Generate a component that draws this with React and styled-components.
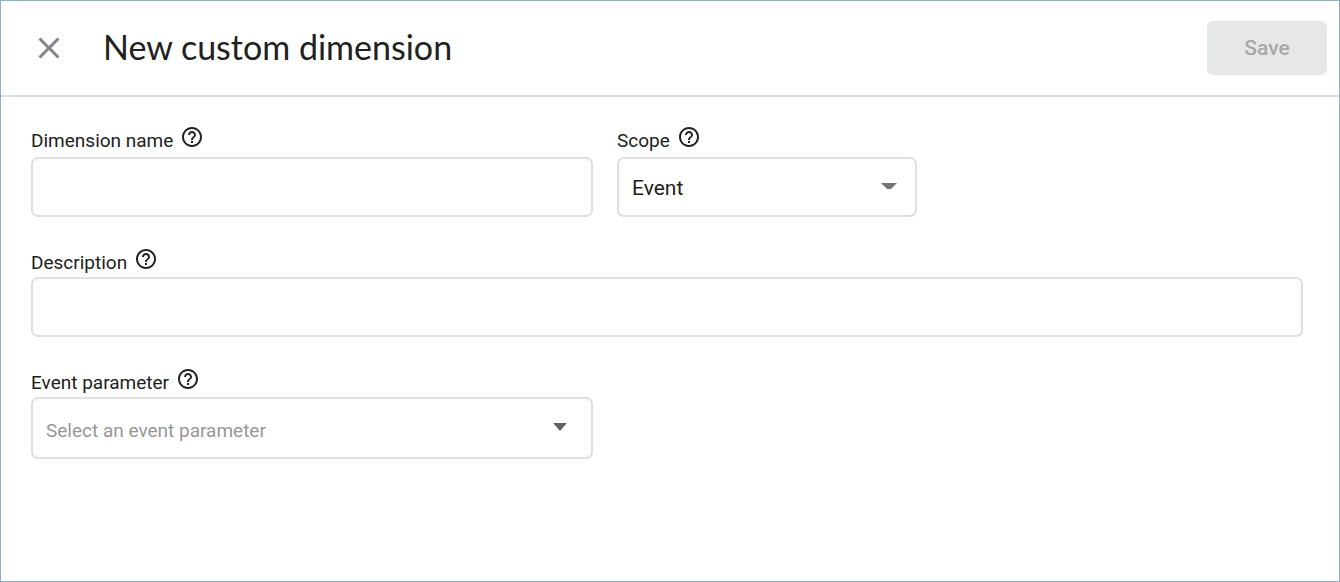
import { styled, createGlobalStyle } from "styled-components";
import { MdClose, MdHelpOutline } from "react-icons/md";

const GlobalStyle = createGlobalStyle`
  *, *::before, *::after {
    box-sizing: border-box;
  }
  body {
    margin: 0;
    background: #fff;
    color: #212121;
    font-family: Roboto, "Liberation Sans", sans-serif;
  }
  button, input, select {
    font-family: inherit;
    margin: 0;
  }
`;

const Page = styled.div`
  display: flex;
  flex-direction: column;
  min-height: 100vh;
  border: 1px solid #8fb0bf;
`;

const Header = styled.header`
  display: flex;
  align-items: center;
  padding: 20px 12px 20px 30px;
  border-bottom: 2px solid #dadce0;
`;

const IconButton = styled.button`
  display: flex;
  padding: 0;
  border: 0;
  background: none;
  color: ${(props) => props.$color};
  cursor: pointer;
`;

const Title = styled.h1`
  flex: 1;
  margin: 0 0 2px 36px;
  font-family: Lato, Roboto, sans-serif;
  font-size: 34px;
  font-weight: 400;
  line-height: 48px;
`;

const SaveButton = styled.button`
  width: 120px;
  height: 54px;
  border: 0;
  border-radius: 6px;
  background: #e6e8e7;
  color: #a6a8a7;
  font-size: 21px;
  font-weight: 500;
`;

const Form = styled.form`
  display: flex;
  flex-direction: column;
  gap: 30px;
  padding: 28px 36px 30px 30px;
`;

const Row = styled.div`
  display: grid;
  grid-template-columns: ${(props) =>
    props.$full ? "1fr" : "minmax(0, 562px) minmax(0, 300px)"};
  gap: 24px;
`;

const LabelLine = styled.div`
  display: flex;
  align-items: flex-start;
  gap: 7px;
  height: ${(props) => (props.$tall ? "32px" : "30px")};
`;

const Label = styled.label`
  padding-top: 5px;
  font-size: 19px;
  line-height: 22px;
`;

const TextInput = styled.input`
  display: block;
  width: 100%;
  height: 60px;
  padding: 0 13px;
  border: 2px solid #dfdfdf;
  border-radius: 7px;
  background: #fff;
  color: #212121;
  font-size: 21px;
`;

const SelectBox = styled.div`
  position: relative;
`;

const Select = styled.select`
  display: block;
  width: 100%;
  height: ${(props) => (props.$placeholder ? "62px" : "60px")};
  padding: ${(props) => (props.$placeholder ? "4px" : "2px")} 48px 0 13px;
  border: 2px solid #dfdfdf;
  border-radius: 7px;
  background: #fff;
  color: ${(props) => (props.$placeholder ? "#979797" : "#212121")};
  font-size: ${(props) => (props.$placeholder ? "19px" : "21px")};
  appearance: none;
`;

const Arrow = styled.svg`
  position: absolute;
  top: 26px;
  right: ${(props) => props.$right};
  pointer-events: none;
`;

function FieldLabel({ id, tall, children }) {
  return (
    <LabelLine $tall={tall}>
      <Label htmlFor={id}>{children}</Label>
      <IconButton type="button" $color="#212121" aria-label={`Help: ${children}`}>
        <MdHelpOutline size={24} />
      </IconButton>
    </LabelLine>
  );
}

export default function App() {
  return (
    <Page>
      <GlobalStyle />
      <Header>
        <IconButton type="button" $color="#80868b" aria-label="Close">
          <MdClose size={36} />
        </IconButton>
        <Title>New custom dimension</Title>
        <SaveButton type="submit" form="dimension" disabled>
          Save
        </SaveButton>
      </Header>
      <Form id="dimension">
        <Row>
          <div>
            <FieldLabel id="name" tall>Dimension name</FieldLabel>
            <TextInput id="name" type="text" />
          </div>
          <div>
            <FieldLabel id="scope" tall>Scope</FieldLabel>
            <SelectBox>
              <Select id="scope" defaultValue="event">
                <option value="event">Event</option>
              </Select>
              <Arrow $right="20px" width="16" height="6" viewBox="0 0 16 6">
                <path d="M0 0h16l-6 6h-4z" fill="#757575" />
              </Arrow>
            </SelectBox>
          </div>
        </Row>
        <Row $full>
          <div>
            <FieldLabel id="description">Description</FieldLabel>
            <TextInput id="description" type="text" />
          </div>
        </Row>
        <Row>
          <div>
            <FieldLabel id="parameter">Event parameter</FieldLabel>
            <SelectBox>
              <Select id="parameter" defaultValue="" $placeholder>
                <option value="">Select an event parameter</option>
              </Select>
              <Arrow $right="26px" width="14" height="8" viewBox="0 0 14 8">
                <path d="M0 0h14l-7 8z" fill="#5f6368" />
              </Arrow>
            </SelectBox>
          </div>
        </Row>
      </Form>
    </Page>
  );
}
